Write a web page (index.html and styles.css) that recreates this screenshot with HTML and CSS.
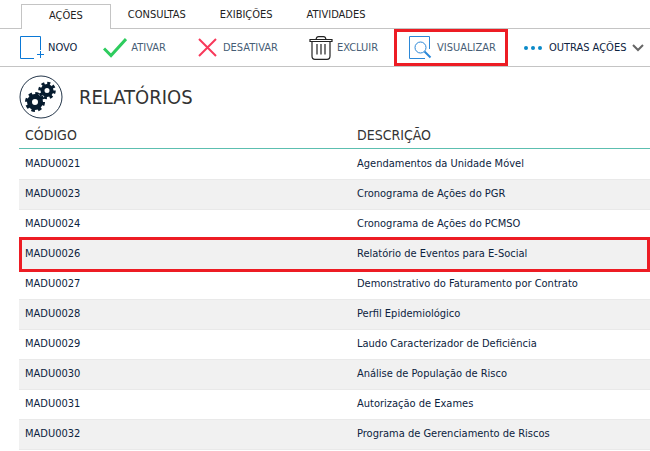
FILE: index.html
```html
<!DOCTYPE html>
<html lang="pt-BR">
<head>
  <meta charset="UTF-8">
  <meta name="viewport" content="width=device-width, initial-scale=1.0">
  <title>Relatórios</title>
  <link rel="stylesheet" href="styles.css">
</head>
<body>
  <nav class="tabs">
    <a href="#acoes" class="tab active">AÇÕES</a>
    <a href="#consultas" class="tab">CONSULTAS</a>
    <a href="#exibicoes" class="tab">EXIBIÇÕES</a>
    <a href="#atividades" class="tab">ATIVIDADES</a>
  </nav>

  <div class="toolbar">
    <button type="button" class="tool enabled">
      <svg width="24" height="24" viewBox="0 0 24 24" fill="none" stroke="#0a78d6">
        <path d="M14 22.500H.5V.5H20.500V14M17 18.500H24M20.500 15V22"/>
      </svg>
      NOVO
    </button>
    <button type="button" class="tool first">
      <svg width="24" height="24" viewBox="0 0 24 24" fill="none" stroke="#2ecc5e" stroke-width="3">
        <path d="M1 12.500L8 19.500L23 3"/>
      </svg>
      ATIVAR
    </button>
    <button type="button" class="tool wide">
      <svg width="22" height="24" viewBox="0 0 22 24" fill="none" stroke="#f8385a" stroke-width="2">
        <path d="M2 3L19 20M19 3L2 20"/>
      </svg>
      DESATIVAR
    </button>
    <button type="button" class="tool wide">
      <svg width="24" height="24" viewBox="0 0 24 24" fill="none" stroke="#222" stroke-width="1.200">
        <path d="M1 3.500H23V5.500H1ZM7 3.500Q7.500 .6 9.500 .6H14.500Q16.500 .6 17 3.500M3 5.500V20Q3 23.300 6 23.300H18Q21 23.300 21 20V5.500M8 8V18.500M12 8V18.500M16 8V18.500"/>
      </svg>
      EXCLUIR
    </button>
    <button type="button" class="tool marked">
      <svg width="24" height="24" viewBox="0 0 24 24" fill="none" stroke="#2b88d8">
        <path d="M16 22.500H.5V.5H20.500V13"/>
        <circle cx="11.500" cy="11.500" r="5.500"/>
        <path d="M15.500 15.500L21.500 21.500" stroke-width="2"/>
      </svg>
      VISUALIZAR
    </button>
    <button type="button" class="tool enabled more">
      <svg width="20" height="24" viewBox="0 0 20 24" fill="#0a8ac8">
        <circle cx="3" cy="12" r="2"/>
        <circle cx="10" cy="12" r="2"/>
        <circle cx="17" cy="12" r="2"/>
      </svg>
      OUTRAS AÇÕES
      <svg width="12" height="8" viewBox="0 0 12 8" fill="none" stroke="#666" stroke-width="2">
        <path d="M1 1L6 6L11 1"/>
      </svg>
    </button>
  </div>

  <main>
    <header class="title">
      <svg width="44" height="44" viewBox="0 0 44 44">
        <circle cx="22" cy="22" r="21" fill="#fff" stroke="#24364a"/>
        <g fill="none" stroke="#061b2e">
          <circle cx="16" cy="27" r="5.500" stroke-width="5"/>
          <circle cx="16" cy="27" r="8.500" stroke-width="3" stroke-dasharray="3.500 3.176"/>
          <circle cx="28" cy="15.500" r="4.500" stroke-width="4"/>
          <circle cx="28" cy="15.500" r="7.300" stroke-width="3" stroke-dasharray="3 2.733"/>
        </g>
      </svg>
      <h1>RELATÓRIOS</h1>
    </header>

    <table>
      <thead>
        <tr><th class="code">CÓDIGO</th><th>DESCRIÇÃO</th></tr>
      </thead>
      <tbody>
        <tr><td>MADU0021</td><td>Agendamentos da Unidade Móvel</td></tr>
        <tr><td>MADU0023</td><td>Cronograma de Ações do PGR</td></tr>
        <tr><td>MADU0024</td><td>Cronograma de Ações do PCMSO</td></tr>
        <tr class="selected"><td>MADU0026</td><td>Relatório de Eventos para E-Social</td></tr>
        <tr><td>MADU0027</td><td>Demonstrativo do Faturamento por Contrato</td></tr>
        <tr><td>MADU0028</td><td>Perfil Epidemiológico</td></tr>
        <tr><td>MADU0029</td><td>Laudo Caracterizador de Deficiência</td></tr>
        <tr><td>MADU0030</td><td>Análise de População de Risco</td></tr>
        <tr><td>MADU0031</td><td>Autorização de Exames</td></tr>
        <tr><td>MADU0032</td><td>Programa de Gerenciamento de Riscos</td></tr>
      </tbody>
    </table>
  </main>
</body>
</html>
```

FILE: styles.css
```css
:root {
  --line: #c4c4c4;
  --row-line: #e9e9e9;
  --text: #0c2340;
  --muted: #465d75;
  --mark: #ed1c24;
}

* {
  box-sizing: border-box;
  margin: 0;
  padding: 0;
}

body {
  background: #fff;
  color: var(--text);
  font-family: Tahoma, "DejaVu Sans Condensed", "Noto Sans", sans-serif;
  font-size: 11px;
}

.tabs {
  display: flex;
  height: 29px;
  padding: 4px 0 0 21px;
  border-bottom: 1px solid var(--line);
}

.tab {
  padding: 0 17px;
  line-height: 22px;
  color: #222;
  text-decoration: none;
}

.tab.active {
  height: 25px;
  padding: 0 27px;
  background: #fff;
  border: 1px solid var(--line);
  border-bottom: none;
}

.toolbar {
  display: flex;
  height: 38px;
  padding-left: 20px;
  border-bottom: 1px solid var(--line);
  white-space: nowrap;
}

.tool {
  display: flex;
  align-items: center;
  gap: 4px;
  background: none;
  border: none;
  color: var(--muted);
  font: inherit;
  cursor: pointer;
}

.tool.first {
  margin-left: 26px;
}

.tool.wide {
  margin-left: 31px;
}

.tool.enabled {
  color: var(--text);
}

.tool.marked {
  margin-left: 16px;
  padding: 0 9px 0 12px;
  border: 3px solid var(--mark);
}

.tool.more {
  gap: 6px;
  margin-left: 15px;
}

main {
  padding-left: 19px;
}

.title {
  display: flex;
  align-items: center;
  gap: 16px;
  height: 60px;
}

h1 {
  color: #333;
  font-size: 20px;
  font-weight: normal;
}

table {
  width: 100%;
  border-collapse: separate;
  border-spacing: 0;
  border-bottom: 1px solid var(--row-line);
}

th,
td {
  padding: 0 6px;
  text-align: left;
}

th {
  height: 22px;
  padding-bottom: 4px;
  border-bottom: 1px solid #5cbfb0;
  color: #333;
  font-size: 14px;
  line-height: 17px;
  font-weight: normal;
}

.code {
  width: 332px;
}

td {
  height: 30px;
  padding-bottom: 2px;
  border-top: 1px solid var(--row-line);
}

tbody tr:first-child td {
  border-top-color: transparent;
}

tbody tr:nth-child(even) {
  background: #f1f1f1;
}

.selected {
  position: relative;
}

.selected::after {
  content: "";
  position: absolute;
  inset: -2px 0 -3px;
  border: 3px solid var(--mark);
}
```
